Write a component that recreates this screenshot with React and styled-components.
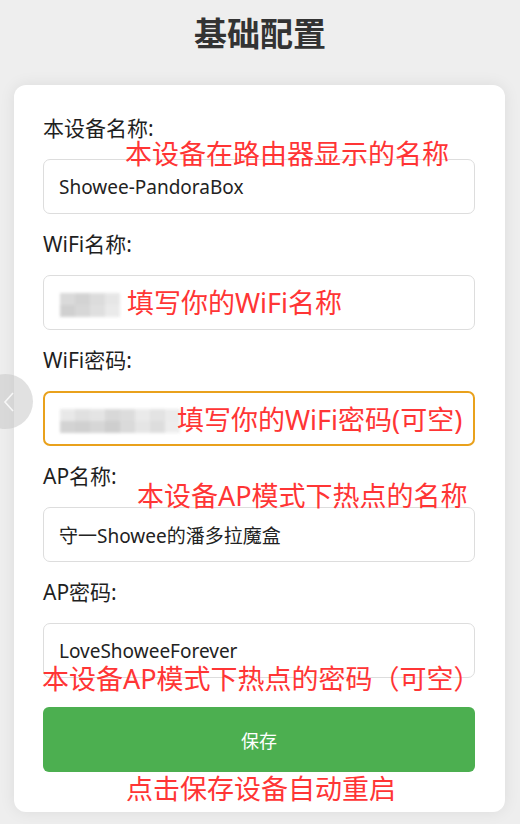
import React from "react";
import styled, { createGlobalStyle } from "styled-components";

const GlobalStyle = createGlobalStyle`
  body {
    margin: 0;
    background-color: #eeeeee;
    font-family: "Noto Sans", "Noto Sans CJK SC", sans-serif;
  }
`;

const Page = styled.div`
  position: relative;
  width: 520px;
  height: 824px;
  overflow: hidden;
  display: flex;
  flex-direction: column;
  padding-top: 12px;
  box-sizing: border-box;
`;

const Title = styled.h1`
  margin: 0 0 33px;
  font-size: 33px;
  line-height: 40px;
  font-weight: bold;
  color: #333333;
  text-align: center;
  font-family: "Noto Sans CJK SC", sans-serif;
`;

const Card = styled.div`
  display: flex;
  flex-direction: column;
  gap: 18px;
  margin: 0 15px 0 14px;
  padding: 31px 30px 40px 29px;
  background-color: #ffffff;
  border-radius: 12px;
  box-shadow: 0 0 16px rgba(0, 0, 0, 0.08);
`;

const Field = styled.div`
  display: flex;
  flex-direction: column;
  gap: 19px;
`;

const Label = styled.div`
  font-size: 21px;
  line-height: 24px;
  color: #1f1f1f;
  font-family: "Noto Sans", "Noto Sans CJK SC", sans-serif;
`;

const InputWrap = styled.div`
  position: relative;
`;

const Input = styled.input`
  display: block;
  box-sizing: border-box;
  width: 100%;
  height: 55px;
  padding: 0 15px;
  border: ${({ $focused }) => ($focused ? "2px solid #e9a11c" : "1px solid #dddddd")};
  border-radius: 7px;
  background: #ffffff;
  font-size: 19px;
  color: #222222;
  font-family: "Noto Sans", "Noto Sans CJK SC", sans-serif;
  outline: none;
`;

const Mosaic = styled.div`
  position: absolute;
  left: 17px;
  top: 18px;
  display: grid;
  grid-template-columns: repeat(${({ $cols }) => $cols}, 15px);
  grid-auto-rows: 12px;
  filter: blur(1.5px);
  opacity: 0.9;
`;

const Block = styled.span`
  background-color: ${({ $shade }) => $shade};
`;

const SaveButton = styled.button`
  display: block;
  width: 100%;
  height: 65px;
  margin-top: 11px;
  border: none;
  border-radius: 6px;
  background-color: #4caf50;
  color: #ffffff;
  font-size: 18px;
  font-family: "Noto Sans CJK SC", sans-serif;
`;

const Note = styled.div`
  position: absolute;
  left: ${({ $x }) => $x}px;
  top: ${({ $y }) => $y}px;
  font-size: 27px;
  line-height: 1;
  color: #ff3535;
  white-space: nowrap;
  font-family: "Noto Sans", "Noto Sans CJK SC", sans-serif;
  pointer-events: none;
`;

const BackHint = styled.div`
  position: absolute;
  left: -22px;
  top: 374px;
  width: 55px;
  height: 55px;
  border-radius: 50%;
  background-color: rgba(200, 200, 200, 0.55);
  display: flex;
  align-items: center;
  justify-content: flex-end;
  padding-right: 18px;
  box-sizing: border-box;
`;

const shadesA = ["#d6d6d6", "#cfcfcf", "#d9d9d9", "#e4e4e4", "#cccccc", "#d3d3d3", "#dcdcdc", "#e8e8e8"];
const shadesB = [
  "#e6e6e6", "#dddddd", "#e2e2e2", "#d4d4d4", "#d9d9d9", "#e8e8e8", "#e0e0e0", "#e9e9e9",
  "#cfcfcf", "#cccccc", "#d2d2d2", "#c9c9c9", "#d6d6d6", "#e3e3e3", "#dadada", "#ececec",
];

const fields = [
  { label: "本设备名称:", value: "Showee-PandoraBox" },
  { label: "WiFi名称:", value: "", mosaic: { cols: 4, shades: shadesA } },
  { label: "WiFi密码:", value: "", focused: true, mosaic: { cols: 8, shades: shadesB } },
  { label: "AP名称:", value: "守一Showee的潘多拉魔盒" },
  { label: "AP密码:", value: "LoveShoweeForever" },
];

// red annotations drawn over the screenshot
const notes = [
  { x: 125, y: 140, text: "本设备在路由器显示的名称" },
  { x: 127, y: 289, text: "填写你的WiFi名称" },
  { x: 177, y: 406, text: "填写你的WiFi密码(可空)" },
  { x: 137, y: 482, text: "本设备AP模式下热点的名称" },
  { x: 42, y: 665, text: "本设备AP模式下热点的密码（可空）" },
  { x: 126, y: 775, text: "点击保存设备自动重启" },
];

const App = () => {
  return (
    <Page>
      <GlobalStyle />
      <Title>基础配置</Title>
      <Card>
        {fields.map((f) => (
          <Field key={f.label}>
            <Label>{f.label}</Label>
            <InputWrap>
              <Input type="text" value={f.value} $focused={f.focused} readOnly />
              {f.mosaic && (
                <Mosaic $cols={f.mosaic.cols}>
                  {f.mosaic.shades.map((s, i) => (
                    <Block key={i} $shade={s} />
                  ))}
                </Mosaic>
              )}
            </InputWrap>
          </Field>
        ))}
        <SaveButton>保存</SaveButton>
      </Card>
      <BackHint>
        <svg width="12" height="20" viewBox="0 0 12 20">
          <path d="M10 1 L2 10 L10 19" fill="none" stroke="#f7f7f7" strokeWidth="1.6" />
        </svg>
      </BackHint>
      {notes.map((n) => (
        <Note key={n.text} $x={n.x} $y={n.y}>
          {n.text}
        </Note>
      ))}
    </Page>
  );
};

export default App;
